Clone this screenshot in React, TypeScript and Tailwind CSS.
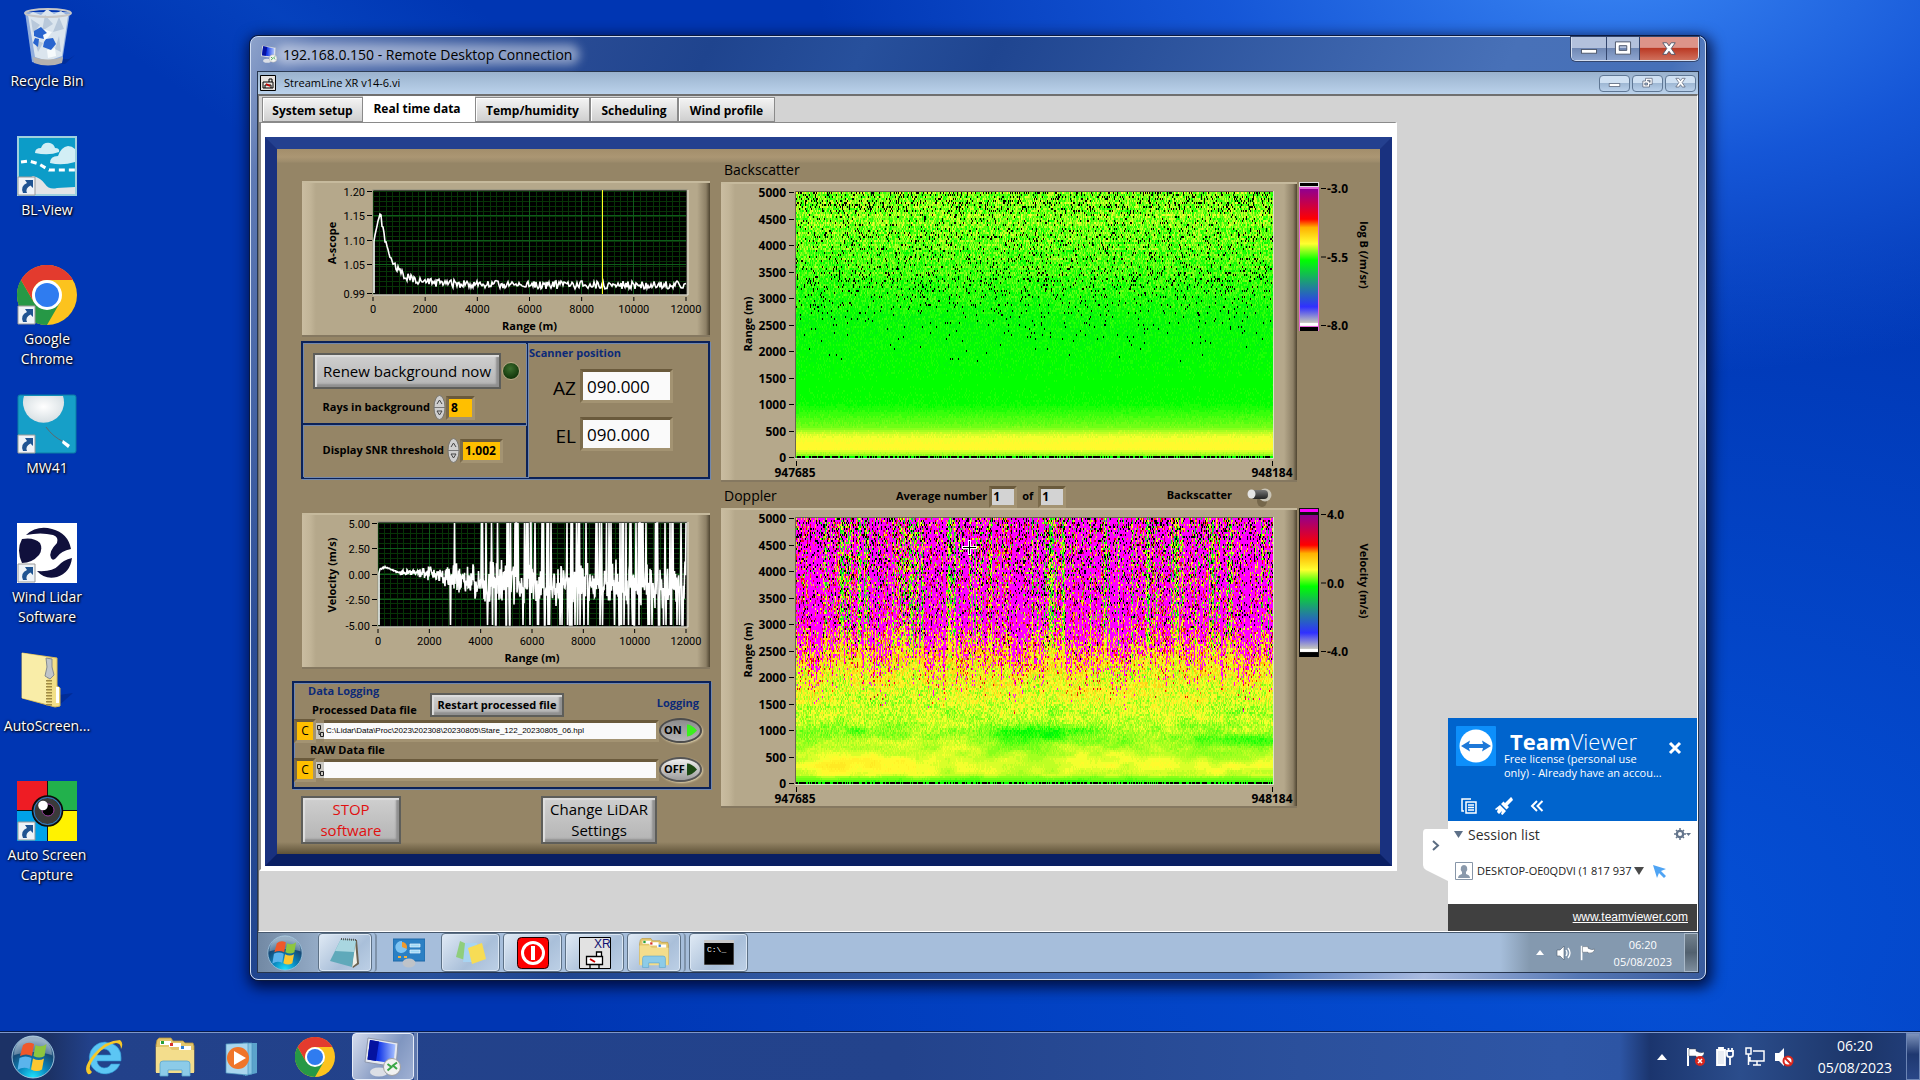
import React, { useMemo, useState } from 'react';

type Tick = [label: string, pos: number];
type Rgb = [number, number, number];

/* ---------- helpers ---------- */

function makeRandom(seed: number) {
  let s = seed;
  return () => {
    s = (s * 1664525 + 1013904223) % 4294967296;
    return s / 4294967296;
  };
}

// smooth 2D value noise
function makeNoise(seed: number) {
  const rnd = makeRandom(seed);
  const table = Array.from({ length: 4096 }, () => rnd());
  const at = (x: number, y: number) => table[(x * 71 + y * 193) & 4095];
  return (x: number, y: number) => {
    const xi = Math.floor(x);
    const yi = Math.floor(y);
    const fx = x - xi;
    const fy = y - yi;
    const u = fx * fx * (3 - 2 * fx);
    const v = fy * fy * (3 - 2 * fy);
    const top = at(xi, yi) * (1 - u) + at(xi + 1, yi) * u;
    const bottom = at(xi, yi + 1) * (1 - u) + at(xi + 1, yi + 1) * u;
    return top * (1 - v) + bottom * v;
  };
}

const RAMP: [number, Rgb][] = [
  [0, [255, 255, 255]],
  [0.03, [190, 190, 190]],
  [0.14, [48, 48, 255]],
  [0.3, [32, 140, 140]],
  [0.48, [0, 255, 0]],
  [0.6, [255, 255, 48]],
  [0.72, [255, 176, 0]],
  [0.78, [255, 0, 0]],
  [1, [144, 0, 144]],
];

const LEVELS = 80;
const BLACK = LEVELS;
const OVER = LEVELS + 1;

function levelColor(level: number) {
  if (level === BLACK) return '#000';
  if (level === OVER) return '#f0f';
  const v = level / (LEVELS - 1);
  let i = 1;
  while (i < RAMP.length - 1 && RAMP[i][0] < v) i++;
  const [a, ca] = RAMP[i - 1];
  const [b, cb] = RAMP[i];
  const t = (v - a) / (b - a);
  return `rgb(${ca.map((c, k) => Math.round(c + (cb[k] - c) * t)).join(',')})`;
}

const toLevel = (v: number) => Math.round(Math.min(1, Math.max(0, v)) * (LEVELS - 1));
const lerp = (a: number, b: number, t: number) => a + (b - a) * Math.min(1, Math.max(0, t));

const COLS = 477;
const ROWS = 133;

// one path per colour level, horizontal runs merged
function buildPaths(cell: (x: number, range: number) => number) {
  const parts: string[][] = Array.from({ length: LEVELS + 2 }, () => []);
  for (let r = 0; r < ROWS; r++) {
    const range = 5000 * (1 - r / (ROWS - 1));
    let start = 0;
    let prev = cell(0, range);
    for (let x = 1; x <= COLS; x++) {
      const next = x < COLS ? cell(x, range) : -1;
      if (next !== prev) {
        parts[prev].push(`M${start} ${r * 2 + 1}h${x - start}`);
        start = x;
        prev = next;
      }
    }
  }
  return parts.map((p, level) => ({ level, d: p.join('') })).filter((p) => p.d);
}

function backscatterPaths() {
  const rnd = makeRandom(7);
  const band = makeRandom(21);
  const bands = Array.from({ length: ROWS }, () => band());
  return buildPaths((x, range) => {
    const b = bands[Math.round((range / 5000) * (ROWS - 1))];
    if (range < 20) return rnd() < 0.65 ? BLACK : toLevel(0.48);
    let black = 0;
    if (range > 1700) black = lerp(0, 0.025, (range - 1700) / 1000);
    if (range > 2700) black = lerp(0.03, 0.09, (range - 2700) / 450) * (0.5 + b);
    if (range > 3600) black = 0.04 + 0.06 * b;
    if (range > 4150 && range < 4350) black = 0.1;
    if (range > 4650) black = 0.12 + 0.11 * b;
    if (rnd() < black) return BLACK;
    if (range < 240) return toLevel(lerp(0.53, 0.607, range / 160) + (rnd() - 0.5) * 0.008);
    if (range < 420) return toLevel(lerp(0.607, 0.585, (range - 240) / 180) + (rnd() - 0.5) * 0.01);
    if (range < 560) return toLevel(lerp(0.585, 0.535, (range - 420) / 140) + (rnd() - 0.5) * 0.01);
    if (range < 1000) return toLevel(lerp(0.535, 0.485, (range - 560) / 440) + (rnd() - 0.5) * 0.012);
    const mean = range < 2700 ? lerp(0.485, 0.478, (range - 1000) / 1000) : lerp(0.483, 0.54, (range - 2700) / 1700);
    const spread = lerp(0.01, 0.11, (range - 1400) / 2800);
    return toLevel(mean + (rnd() - 0.5) * spread + (range > 3400 ? (b - 0.5) * 0.025 : 0));
  });
}

function dopplerPaths() {
  const rnd = makeRandom(99);
  const colRnd = makeRandom(5);
  const noise = makeNoise(3);
  const cols = Array.from({ length: COLS + 1 }, (_, x) => colRnd() * 0.75 + noise(x / 7, 3) * 0.5 - 0.1);
  return buildPaths((x, range) => {
    const c = cols[x];
    const u = x / COLS;
    if (range < 20) return rnd() < 0.6 ? BLACK : toLevel(0.48);
    const onset = 1250 + (1 - c) * 1200;
    const wild = lerp(0, 1, (range - onset) / 900);
    if (rnd() < wild * lerp(0.5, 0.98, (range - 1600) / 1400)) {
      if (range > 2300 && rnd() < lerp(0.02, 0.15, (range - 2500) / 2300)) return BLACK;
      if (rnd() < lerp(0.25, 0.78, (range - 1700) / 1300) * lerp(0.1, 1.5, c * 1.05)) return OVER;
      if (c < 0.25) return toLevel(0.36 + rnd() * 0.32);
      return toLevel(lerp(0.56, 0.47, (range - 2000) / 2000) + rnd() * lerp(0.3, 0.45, (range - 2000) / 1500));
    }
    let v = 0.568 + (noise(x / 15, range / 110) - 0.5) * 0.04;
    v += (noise(x / 40 + 9, range / 260 + 5) - 0.5) * 0.03;
    v += lerp(0, 0.075, (range - 1300) / 1100);
    v += (rnd() - 0.5) * lerp(0.01, 0.15, (range - 500) / 1700);
    v += (c - 0.5) * lerp(0.005, 0.04, (range - 600) / 1400);
    // thin updraft layer
    v -= 0.08 * Math.exp(-(((range - 930) / 190) ** 2) - ((u - 0.52) / 0.12) ** 2);
    v -= 0.07 * Math.exp(-(((range - 800) / 140) ** 2) - ((u - 0.98) / 0.2) ** 2);
    v -= 0.025 * Math.exp(-(((range - 950) / 120) ** 2) - ((u - 0.12) / 0.25) ** 2);
    v += 0.025 * Math.exp(-(((range - 330) / 190) ** 2)) * (u < 0.25 ? 1.5 : 0.9);
    if (range < 150) v = lerp(0.5, v, range / 170);
    return toLevel(v);
  });
}

function ascopePath() {
  const rnd = makeRandom(11);
  const pts: string[] = ['72 112', '72 60'];
  for (let x = 73; x <= 384; x++) {
    const t = x - 71;
    let v: number;
    if (t < 7) v = lerp(1.1, 1.156, (t - 1) / 6);
    else v = 1.0085 + 0.128 * Math.exp(-(t - 7) / 9) + 0.022 * Math.exp(-(t - 7) / 34);
    const y = 113 - (v - 0.99) * 490 + (rnd() - 0.5) * (t < 7 ? 2 : 8);
    pts.push(`${x} ${y.toFixed(1)}`);
  }
  return `M${pts.join('L')}`;
}

function velocityPath() {
  const rnd = makeRandom(42);
  const pts: string[] = ['77 112', '77 60'];
  for (let x = 78; x <= 384; x += 0.5) {
    const t = x - 76;
    const base = t < 22 ? 54 + Math.abs(t - 7) * 0.4 : 59 + lerp(0, 13, (t - 40) / 80);
    const amp = t < 22 ? 1 : t < 40 ? 5 : lerp(8, 36, (t - 40) / 70);
    let y = base + (rnd() - 0.5) * amp * (0.5 + rnd());
    const spike = t < 68 ? 0 : t < 100 ? 0.1 : 0.25;
    if (rnd() < spike) y = rnd() < 0.5 ? 10 : 112;
    pts.push(`${x} ${Math.min(112, Math.max(10, y)).toFixed(1)}`);
  }
  return `M${pts.join('L')}`;
}

/* ---------- instrument widgets ---------- */

const RAISED =
  'border-t-2 border-b-2 border-t-[#c6ba9d] border-b-[#857860] bg-[linear-gradient(90deg,#cabda1_0,#c2b598_8px,#b5a88b_14px,#b5a88b_calc(100%-13px),#8d8066_calc(100%-4px),#4f4531_100%)]';
const SUNKEN = 'border-[3px] border-t-[#6a5a3c] border-l-[#7b6b4b] border-r-[#a39372] border-b-[#a39372]';
const GROUP = 'border-[#0b2259] shadow-[inset_1px_1px_0_#7288ae,1px_1px_0_#7288ae]';
const METAL =
  'border-2 border-[#5e5e5a] bg-[linear-gradient(#cfcfcf,#b4b4b4)] shadow-[inset_2px_2px_1px_#dedede,inset_-3px_-3px_2px_#909090]';

interface LineGraphProps {
  left: number;
  yTicks: Tick[];
  yTitle: string;
  path: string;
  cursor?: number;
}

const LineGraph: React.FC<LineGraphProps> = ({ left, yTicks, yTitle, path, cursor }) => {
  const right = 384;
  const step = (right - left) / 6;
  const minorX = Array.from({ length: 48 }, (_, i) => left + (i * step) / 8);
  const minorY = Array.from({ length: 20 }, (_, i) => 10 + i * 5);

  return (
    <div className={`ml-[10px] h-[156px] w-[408px] ${RAISED}`}>
      <svg viewBox="0 2 408 152" className="h-[152px] w-full text-[11px]">
        <rect x={left} y="9" width={right - left + 1} height="105" fill="#000" stroke="#8d8d80" />
        <g stroke="#073407" shapeRendering="crispEdges">
          {minorX.map((x) => <path key={x} d={`M${x} 10V113`} />)}
          {minorY.map((y) => <path key={y} d={`M${left} ${y}H${right}`} />)}
        </g>
        <g stroke="#0f5a1a" shapeRendering="crispEdges">
          {[1, 2, 3, 4, 5].map((i) => <path key={i} d={`M${left + i * step} 10V113`} />)}
          {yTicks.slice(1, 4).map(([label, y]) => <path key={label} d={`M${left} ${y}H${right}`} />)}
        </g>
        <path d={path} fill="none" stroke="#fff" strokeWidth="1.6" />
        {cursor && <path d={`M${cursor} 9V113`} stroke="#ffff20" shapeRendering="crispEdges" />}
        <path d={`M${left} 114H386V9`} fill="none" stroke="#e8e4d8" />
        <g className="font-['Roboto','Open_Sans',sans-serif]">
          {yTicks.map(([label, y]) => (
            <g key={label}>
              <text x={left - 8} y={y + 4} textAnchor="end">{label}</text>
              <path d={`M${left - 6} ${y}h5`} stroke="#000" />
            </g>
          ))}
          {[0, 2000, 4000, 6000, 8000, 10000, 12000].map((v, i) => (
            <g key={v}>
              <text x={left + i * step} y="132" textAnchor="middle">{v}</text>
              <path d={`M${left + i * step} 116v4`} stroke="#000" />
            </g>
          ))}
        </g>
        <text x={(left + right) / 2} y="149" textAnchor="middle" className="font-bold">Range (m)</text>
        <text transform="translate(34 62) rotate(-90)" textAnchor="middle" className="font-bold">{yTitle}</text>
      </svg>
    </div>
  );
};

interface HeatMapProps {
  paths: { level: number; d: string }[];
  cross?: boolean;
}

const HeatMap: React.FC<HeatMapProps> = ({ paths, cross }) => (
  <div className={`h-[300px] w-[576px] ${RAISED}`}>
    <svg viewBox="0 2 576 296" className="h-[296px] w-full text-[12px] font-bold">
      <svg x="75" y="10" width={COLS} height="266" viewBox={`0 0 ${COLS} 266`}>
        <g fill="none" strokeWidth="2" shapeRendering="crispEdges">
          {paths.map(({ level, d }) => <path key={level} d={d} stroke={levelColor(level)} />)}
        </g>
      </svg>
      <path d="M74.500 276V9.500H552" fill="none" stroke="#6c6450" />
      <path d="M74 276.500H552.500V9" fill="none" stroke="#d9e8c4" />
      {Array.from({ length: 11 }, (_, i) => (
        <g key={i}>
          <text x="65" y={15 + i * 26.5} textAnchor="end">{5000 - i * 500}</text>
          <path d={`M68 ${Math.round(10 + i * 26.5) + 0.5}h5`} stroke="#000" />
        </g>
      ))}
      <path d="M75.500 279v5M551.500 279v5" stroke="#000" />
      <text x="74" y="295" textAnchor="middle">947685</text>
      <text x="551" y="295" textAnchor="middle">948184</text>
      <text transform="translate(31 142) rotate(-90)" textAnchor="middle" className="text-[11px]">Range (m)</text>
      {cross && (
        <g stroke="#fff" strokeWidth="3">
          <path d="M248.500 32v15M241 39.500h15" />
          <path d="M248.500 33v13M242 39.500h13" stroke="#000" strokeWidth="1" />
        </g>
      )}
    </svg>
  </div>
);

interface ColorScaleProps {
  id: string;
  labels: string[];
  title: string;
  overTop?: boolean;
}

const ColorScale: React.FC<ColorScaleProps> = ({ id, labels, title, overTop }) => (
  <svg viewBox="0 0 82 152" className="ml-px h-[152px] w-[82px] overflow-visible text-[12px] font-bold">
    <defs>
      <linearGradient id={id} x1="0" y1="1" x2="0" y2="0">
        {RAMP.map(([at, c]) => <stop key={at} offset={at} stopColor={`rgb(${c.join(',')})`} />)}
      </linearGradient>
    </defs>
    <rect x="1" y="5" width="20" height="144" fill={overTop ? '#111' : '#e464d8'} />
    <rect x="2" y="7" width="18" height="137" fill={`url(#${id})`} />
    <rect x="2" y="141" width="18" height="2" fill="#fff" />
    <rect x="1" y="0" width="20" height="5" fill={overTop ? '#111' : '#ddd'} />
    <rect x="2" y="1" width="18" height="3" fill={overTop ? '#f0f' : '#000'} />
    <rect x="2" y="145" width="18" height="4" fill="#000" />
    {labels.map((label, i) => (
      <g key={label}>
        <path d={`M23 ${6.5 + i * 68.5}h5`} stroke="#000" />
        <text x="29" y={11 + i * 68.5}>{label}</text>
      </g>
    ))}
    <text transform="translate(62 73) rotate(90)" textAnchor="middle" className="text-[11px]">{title}</text>
  </svg>
);

const Spinner: React.FC<{ label: string }> = ({ label }) => (
  <button type="button" aria-label={label} className="h-[25px] w-[13px]">
    <svg viewBox="0 0 13 25" className="size-full">
      <ellipse cx="6.500" cy="12.500" rx="5.500" ry="12" fill="#cfcfcf" stroke="#77746c" />
      <path d="M1 12.500h11" stroke="#777" />
      <path d="M4 9l2.500-4L9 9M4 16l2.500 4L9 16z" fill="none" stroke="#444" />
    </svg>
  </button>
);

interface SwitchProps {
  on: boolean;
  label: string;
  onToggle: () => void;
}

const OvalSwitch: React.FC<SwitchProps> = ({ on, label, onToggle }) => (
  <button
    type="button"
    role="switch"
    aria-checked={on}
    aria-label={label}
    onClick={onToggle}
    className={`flex h-[25px] w-[43px] items-center justify-between rounded-[50%] border-2 pr-[3px] pl-[3px] text-[11px] font-bold shadow-[1px_1px_2px_#d8cba8] ${
      on ? 'border-[#4c4c4c] bg-[linear-gradient(#8d8d8d,#b5b5b5)]' : 'border-[#555] bg-[linear-gradient(#efefef,#9c9c9c)]'
    }`}
  >
    {on ? 'ON' : 'OFF'}
    <svg viewBox="0 0 11 13" className="h-[13px] w-[10px] shrink-0">
      <path d="M0 0Q5 0 11 6.500Q5 13 0 13z" fill={on ? '#3cf01e' : '#1d4a14'} />
    </svg>
  </button>
);

const PathRow: React.FC<{ id: string; value: string }> = ({ id, value }) => (
  <div className="flex h-6 items-center">
    <button type="button" aria-label="Select drive" className={`h-6 w-[22px] text-[12px] leading-4 font-medium ${SUNKEN} bg-[#ffbf00]`}>C</button>
    <svg viewBox="0 0 8 16" className="h-4 w-2 bg-[#c9c7c0]" fill="none" stroke="#222">
      <path d="M1.500 2.500h3v4h-3zM4.500 9.500h3v4h-3zM3 6.500v5h1.500" />
    </svg>
    <input
      id={id}
      defaultValue={value}
      className={`h-[22px] w-[335px] bg-[#fafafa] pl-0.5 font-['Liberation_Sans',sans-serif] text-[8px] font-normal ${SUNKEN} border-l-0`}
    />
  </div>
);

const DataPanel: React.FC = () => {
  const [processed, setProcessed] = useState(true);
  const [raw, setRaw] = useState(false);
  const ascope = useMemo(ascopePath, []);
  const velocity = useMemo(velocityPath, []);
  const backscatter = useMemo(backscatterPaths, []);
  const doppler = useMemo(dopplerPaths, []);

  return (
    <div className="border-[12px] border-t-[#24408f] border-r-[#19317f] border-b-[#0a1f63] border-l-[#19317f] bg-[#958566]">
      <div className="flex bg-[linear-gradient(#a38e6b_0,#ab9673_8px,#9c8b6b_13px,#958566_14px,#958566_calc(100%-12px),#5f5238_100%)] pb-2.5">
        <div className="w-[434px] shrink-0 pt-8 pl-[15px]">
          <LineGraph
            left={71}
            yTicks={[['1.20', 10.5], ['1.15', 34.5], ['1.10', 59.5], ['1.05', 83.5], ['0.99', 112.5]]}
            yTitle="A-scope"
            path={ascope}
            cursor={300.5}
          />

          <div className={`mt-1 ml-[9px] flex h-[138px] w-[409px] border-2 text-[11px] font-bold ${GROUP}`}>
            <div className={`w-[225px] border-r-2 ${GROUP}`}>
              <div className={`h-[82px] border-b-2 pt-2.5 pl-2.5 ${GROUP}`}>
                <div className="flex items-center gap-px">
                  <button type="button" className={`h-9 w-[188px] text-[15px] font-normal ${METAL}`}>Renew background now</button>
                  <span className="size-[18px] rounded-full border border-[#b9aa86] bg-[radial-gradient(circle_at_45%_35%,#3c6e2e,#14380c_70%)]" />
                </div>
                <div className="mt-1.5 flex items-center justify-end pr-[51px]">
                  <label htmlFor="rays" className="mr-[3px]">Rays in background</label>
                  <Spinner label="Change rays in background" />
                  <input id="rays" defaultValue="8" className={`h-6 w-[29px] bg-[#ffbf00] pl-0.5 text-[12px] ${SUNKEN}`} />
                </div>
              </div>
              <div className="flex items-center justify-end pt-[13px] pr-[23px]">
                <label htmlFor="snr" className="mr-[3px]">Display SNR threshold</label>
                <Spinner label="Change SNR threshold" />
                <input id="snr" defaultValue="1.002" className={`h-6 w-[43px] bg-[#ffbf00] pl-0.5 text-[12px] ${SUNKEN}`} />
              </div>
            </div>
            <div className="flex-1 pt-0.5 pl-px">
              <h3 className="leading-4 text-[#0c2a78]">Scanner position</h3>
              <div className="mt-2 flex flex-col gap-[14px] pr-[35px] text-[17px] font-normal">
                {['AZ', 'EL'].map((axis) => (
                  <div key={axis} className="flex items-center justify-end gap-1">
                    <label htmlFor={axis} className="pt-1 text-[19px] leading-7">{axis}</label>
                    <input id={axis} readOnly value="090.000" className={`h-[34px] w-[93px] bg-[#fafafa] pl-1 ${SUNKEN}`} />
                  </div>
                ))}
              </div>
            </div>
          </div>

          <div className="h-[34px]" />
          <LineGraph
            left={76}
            yTicks={[['5.00', 10.5], ['2.50', 35.5], ['0.00', 61.5], ['-2.50', 86.5], ['-5.00', 112.5]]}
            yTitle="Velocity (m/s)"
            path={velocity}
          />

          <div className={`mt-3 h-[108px] w-[419px] border-2 text-[11px] font-bold ${GROUP}`}>
            <div className="flex h-[35px] pr-2.5">
              <div className="w-[136px] pl-[14px]">
                <h3 className="leading-4 text-[#0c2a78]">Data Logging</h3>
                <label htmlFor="processed" className="block pl-1 leading-[22px]">Processed Data file</label>
              </div>
              <button type="button" className={`mt-2.5 h-6 w-[134px] shrink-0 ${METAL}`}>Restart processed file</button>
              <span className="ml-auto pt-3 leading-4 text-[#0c2a78]">Logging</span>
            </div>
            <div className="flex items-center">
              <PathRow id="processed" value="C:\Lidar\Data\Proc\2023\202308\20230805\Stare_122_20230805_06.hpl" />
              <OvalSwitch on={processed} label="Processed logging" onToggle={() => setProcessed(!processed)} />
            </div>
            <label htmlFor="raw" className="block pl-4 leading-[14px]">RAW Data file</label>
            <div className="flex items-center">
              <PathRow id="raw" value="" />
              <OvalSwitch on={raw} label="RAW logging" onToggle={() => setRaw(!raw)} />
            </div>
          </div>

          <div className="mt-[7px] flex justify-between pr-[54px] pl-[9px] text-[15px] leading-[21px]">
            <button type="button" className={`h-12 w-[100px] text-[#e01010] ${METAL}`}>STOP<br />software</button>
            <button type="button" className={`h-12 w-[116px] ${METAL}`}>Change LiDAR<br />Settings</button>
          </div>
        </div>

        <div className="pt-[11px] pl-[10px]">
          <h2 className="pl-[3px] text-[14px] leading-5">Backscatter</h2>
          <div className="mt-0.5 flex">
            <HeatMap paths={backscatter} />
            <ColorScale id="scale-b" labels={['-3.0', '-5.5', '-8.0']} title="log B (/m/sr)" />
          </div>
          <div className="flex h-[26px] w-[576px] items-center pl-[3px] text-[11px] font-bold">
            <h2 className="w-[172px] text-[14px] font-normal">Doppler</h2>
            <div className="flex items-center pt-[3px]">
              <label htmlFor="avg" className="mr-0.5">Average number</label>
              <input id="avg" readOnly value="1" className={`h-[22px] w-[28px] bg-[#d3d3d3] pl-px text-[12px] ${SUNKEN}`} />
              <label htmlFor="avg-total" className="mx-[5px]">of</label>
              <input id="avg-total" readOnly value="1" className={`h-[22px] w-[28px] bg-[#d3d3d3] pl-px text-[12px] ${SUNKEN}`} />
            </div>
            <label htmlFor="mode" className="ml-auto">Backscatter</label>
            <button id="mode" type="button" aria-label="Toggle display mode" className="mr-[25px] ml-[14px] h-6 w-[26px]">
              <svg viewBox="0 0 26 24" className="size-full">
                <defs>
                  <linearGradient id="lever" x1="0" y1="0" x2="0" y2="1">
                    <stop offset="0" stopColor="#777" />
                    <stop offset="1" stopColor="#222" />
                  </linearGradient>
                </defs>
                <ellipse cx="16" cy="18" rx="5" ry="6" fill="#75674b" />
                <circle cx="19" cy="12" r="6.500" fill="#c9c4b6" />
                <rect x="5" y="7" width="17" height="9" rx="4" fill="url(#lever)" />
                <ellipse cx="5.500" cy="11" rx="4" ry="4.500" fill="#e4e4e4" />
              </svg>
            </button>
          </div>
          <div className="flex">
            <HeatMap paths={doppler} cross />
            <ColorScale id="scale-d" labels={['4.0', '0.0', '-4.0']} title="Velocity (m/s)" overTop />
          </div>
        </div>
      </div>
    </div>
  );
};

/* ---------- icons ---------- */

const Orb: React.FC<{ id: string; className: string }> = ({ id, className }) => (
  <svg viewBox="0 0 44 44" className={className}>
    <defs>
      <radialGradient id={id} cx="0.5" cy="1" r="0.9">
        <stop offset="0" stopColor="#1fe6ff" />
        <stop offset="0.4" stopColor="#0a86bd" />
        <stop offset="0.75" stopColor="#164a76" />
        <stop offset="1" stopColor="#6c8fae" />
      </radialGradient>
    </defs>
    <circle cx="22" cy="22" r="21" fill={`url(#${id})`} stroke="#9cc2dc" />
    <path d="M3 20a19 19 0 0 1 38 0q-19-6-38 0z" fill="#fff" opacity="0.3" />
    <path d="M12 10q5-4 11-1l-2 12q-6-3-12 0z" fill="#f0582a" />
    <path d="M24.500 10q6 3 11-1l-2 12q-5 3-11 0z" fill="#8dc63f" />
    <path d="M8.500 23q6-3 12 0l-2 11q-6-3-12 1z" fill="#5bb4ec" />
    <path d="M22 23.500q6 3 11 0l-2 11q-5 3-11 0z" fill="#fdc730" />
  </svg>
);

const ChromeLogo: React.FC<{ className: string }> = ({ className }) => (
  <svg viewBox="0 0 60 60" className={className}>
    <circle cx="30" cy="30" r="30" fill="#fcc31e" />
    <path d="M4 15A30 30 0 0 0 30 60L43 37.500L30 30L17 37.500z" fill="#269846" />
    <path d="M4 15A30 30 0 0 1 56 15H30A15 15 0 0 0 17 37.500z" fill="#e33b2e" />
    <circle cx="30" cy="30" r="15" fill="#fff" />
    <circle cx="30" cy="30" r="12" fill="#2f7cf0" />
  </svg>
);

const FolderIcon: React.FC<{ className: string }> = ({ className }) => (
  <svg viewBox="0 0 42 40" className={className}>
    <path d="M3 3l2-2h12l2 3h10l2 2h8l1 3v26H2V8z" fill="#e3c66c" stroke="#b8953c" strokeWidth="0.800" />
    <path d="M6 4h11v4H6zM15 6h12v4H15zM25 9h12v4H25z" fill="#fff" />
    <path d="M7 4h3v3H7z" fill="#26a03a" />
    <path d="M16 6h3v3h-3z" fill="#d8342c" />
    <path d="M27 9h3v3h-3z" fill="#2f7fd6" />
    <path d="M2 10h13l3 3h22v23H2z" fill="#f3dd8c" />
    <path d="M6 39V27q0-3 3-3h24q3 0 3 3v12h-8v-6H14v6z" fill="#8ccbe8" stroke="#5aa5cc" strokeWidth="0.800" />
  </svg>
);

const RemoteIcon: React.FC<{ className: string }> = ({ className }) => (
  <svg viewBox="0 0 38 40" className={className}>
    <defs>
      <linearGradient id="remote-screen" x1="0" y1="0" x2="1" y2="0">
        <stop offset="0" stopColor="#0518b8" />
        <stop offset="0.4" stopColor="#1438e8" />
        <stop offset="1" stopColor="#a9c3ff" />
      </linearGradient>
    </defs>
    <ellipse cx="15" cy="35" rx="9" ry="4.500" fill="#dcdfe6" />
    <path d="M4 1l30 5-2 24L1 25z" fill="#e6e9f0" stroke="#8e97aa" />
    <path d="M6 3l25.500 4.500-2 19L3.500 22.500z" fill="url(#remote-screen)" />
    <path d="M6 3l9 1.500-3 19.500-8.500-1.500z" fill="#0412a0" />
    <circle cx="28" cy="30" r="8.500" fill="#f1f1f1" stroke="#a0a0a0" />
    <path d="M23.500 27l4 3-4 3.500M33 25.500l-4 3 4 3.500" fill="none" stroke="#3aa646" strokeWidth="2" />
  </svg>
);

const ShortcutArrow = () => (
  <g>
    <path d="M1 41h17v18H1z" fill="#eef3f8" stroke="#9a9a9a" />
    <path d="M6 57q-3-7 4-10l-2-3h8v8l-2.500-2.500Q8 52 10 57z" fill="#1f5391" />
  </g>
);

const RecycleBin = () => (
  <svg viewBox="0 0 60 60" className="size-[60px]">
    <path d="M14 52h38l6-4-10 9H20z" fill="#001f70" opacity="0.35" />
    <path d="M8 5l7 50q15 5 30 0l8-50z" fill="#a9c2e4" opacity="0.85" />
    <path d="M11 8l5-3 8 3 6-6 7 5 7-3 7 5-6 40-14 5-13-4z" fill="#dbe5ee" />
    <path d="M14 12l9 6-7 8zM28 8l8 9-11 7zM42 10l5 12-11 3zM17 32l9 4-5 9zM42 29l-4 13 6 3z" fill="#b8c8da" />
    <path d="M26 22l9 3-6 8-8-2zM30 43l8-2 1 8-8 2z" fill="#f6fafc" />
    <path d="M17 24l7-4 6 6-4 2 1 4-5-1-5-2zM29 32l7-1 3 6-5 6-8-3 1-5zM18 31l4 1-1 8-5-4z" fill="#2864cf" />
    <ellipse cx="31" cy="6" rx="23" ry="4" fill="none" stroke="#c7c7c7" strokeWidth="2" />
    <path d="M16 50q15 5 30 0l-1 6q-14 5-28 0z" fill="#b5b2af" />
  </svg>
);

const BlView = () => (
  <svg viewBox="0 0 60 60" className="size-[60px]">
    <path d="M0 0h60v60H0z" fill="#9fd0de" />
    <path d="M2 2h56v56H2z" fill="#0c9cc8" />
    <path d="M18 17q0-5 6-5 2-6 9-5 4 1 5 5 5 0 4 4-10 4-24 1zM33 27q0-7 8-7 3-9 10-10 4 0 7 3v13q-13 4-25 1z" fill="#d2eef5" />
    <path d="M4 26l8-1 10 3 10 6h26" fill="none" stroke="#fff" strokeWidth="3" strokeDasharray="6 4" />
    <path d="M2 58V48l14-8q8 2 12 8t12 4l18-1v7z" fill="#e2e4e6" />
    <ShortcutArrow />
  </svg>
);

const Mw41 = () => (
  <svg viewBox="0 0 60 60" className="size-[60px]">
    <defs>
      <radialGradient id="balloon" cx="0.5" cy="0.4" r="0.6">
        <stop offset="0" stopColor="#fff" />
        <stop offset="1" stopColor="#d6dee2" />
      </radialGradient>
    </defs>
    <rect x="1" y="1" width="58" height="58" rx="2" fill="#169fc8" stroke="#0a7da5" />
    <path d="M7 2h39a20.500 20.500 0 1 1-39 0z" fill="url(#balloon)" />
    <path d="M29 33q7 10 18 15" fill="none" stroke="#5c6a70" />
    <path d="M46 46l7 5-2 3-6-5z" fill="#fff" />
    <ShortcutArrow />
  </svg>
);

const WindLidar = () => (
  <svg viewBox="0 0 60 60" className="size-[60px]">
    <path d="M0 0h60v60H0z" fill="#fff" />
    <path d="M9 12Q20 2 35 6q16 4 19 20-10 2-14 8-4 5-6 1-3-6 6-15 2-6-4-8-12-3-27 0z" fill="#10103c" />
    <path d="M5 16q12-2 18 4 3 6-1 12-7 8-17 8Q-1 27 5 16z" fill="#10103c" />
    <path d="M20 48q16 1 21-5 5-6 14-8-2 15-15 19-12 3-20-6z" fill="#10103c" />
    <ShortcutArrow />
  </svg>
);

const ZipFolder = () => (
  <svg viewBox="0 0 60 60" className="size-[60px]">
    <path d="M40 55l16-14-14 2z" fill="#00227c" opacity="0.5" />
    <path d="M5 1l35 5v28l3 2v18l-5 1L5 46z" fill="#f2df88" stroke="#d6b95a" />
    <path d="M5 1l25 4v47L5 46z" fill="#f9eda8" />
    <path d="M39 35h3v16h-3z" fill="#fff" />
    <path d="M32 28v26" stroke="#a08b45" strokeWidth="6" strokeDasharray="1.500 1.500" />
    <path d="M29 6l6 1v8l2 8-4 4-5-3 2-9z" fill="#c0c5c9" stroke="#858b90" />
  </svg>
);

const AutoCapture = () => (
  <svg viewBox="0 0 60 60" className="size-[60px]">
    <path d="M0 0h30v30H0z" fill="#ee1c24" />
    <path d="M30 0h30v30H30z" fill="#22b14c" />
    <path d="M0 30h30v30H0z" fill="#00a2e8" />
    <path d="M30 30h30v30H30z" fill="#fff200" />
    <path d="M30.500 0v60M0 29.500h60" stroke="#111" />
    <circle cx="30.500" cy="30" r="15" fill="#3a3a3a" stroke="#0b0b0b" strokeWidth="1.500" />
    <circle cx="30.500" cy="30" r="13.500" fill="none" stroke="#2b84d8" />
    <circle cx="31" cy="29" r="6" fill="#000" stroke="#9a3fa0" />
    <circle cx="26" cy="24.500" r="4.800" fill="#fff" />
    <ShortcutArrow />
  </svg>
);

const FlagIcon: React.FC<{ alert?: boolean; className: string }> = ({ alert, className }) => (
  <svg viewBox="0 0 20 20" className={className}>
    <path d="M2 1v18" stroke="#fff" strokeWidth="2" />
    <path d="M3 2h7v2q5 3 8 1v2q-2 4-8 3V9H3z" fill="#fff" stroke="#3c4654" strokeWidth="0.500" />
    {alert && (
      <g>
        <circle cx="14" cy="14" r="5" fill="#d9261c" />
        <path d="M12 12l4 4m0-4l-4 4" stroke="#fff" strokeWidth="1.500" />
      </g>
    )}
  </svg>
);

const CaptionGlyph: React.FC<{ kind: string; className: string }> = ({ kind, className }) => (
  <svg viewBox="0 0 20 18" className={className} fill="#fff" stroke="#4b5569" strokeWidth="1">
    {kind === 'min' && <rect x="2" y="10" width="16" height="4" />}
    {kind === 'max' && <path d="M2 2h16v13H2zM6 6v5h8V6z" fillRule="evenodd" />}
    {kind === 'restore' && <path d="M7 2h10v9h-4v4H3V6h4zM6 9v3h4V9zM10 5v1h3v2h1V5z" fillRule="evenodd" />}
    {kind === 'close' && <path d="M3 2h4.500L10 5.500L12.500 2H17l-4.500 6.500L17 15h-4.500L10 11.500L7.500 15H3l4.500-6.500z" />}
  </svg>
);

/* ---------- windows ---------- */

const TABS = [
  { name: 'System setup', width: 'w-[101px]' },
  { name: 'Real time data', width: 'w-[112px]' },
  { name: 'Temp/humidity', width: 'w-[115px]' },
  { name: 'Scheduling', width: 'w-[88px]' },
  { name: 'Wind profile', width: 'w-[97px]' },
];

const TeamViewer: React.FC = () => (
  <aside className="absolute right-0 bottom-0 flex items-start">
    <button type="button" aria-label="Collapse panel" className="mt-[111px] h-[52px] w-[26px]">
      <svg viewBox="0 0 26 52" className="size-full">
        <path d="M26 0H4Q1 0 1 4v32q0 3 3 5l22 11z" fill="#fff" />
        <path d="M11 12l5 4.500L11 21" fill="none" stroke="#5c6d82" strokeWidth="2" />
      </svg>
    </button>
    <div className="w-[249px]">
      <div className="h-[103px] bg-[#0064cd] text-white">
        <div className="flex h-[79px] pt-2 pl-2">
          <svg viewBox="0 0 40 40" className="size-10 shrink-0">
            <rect width="40" height="40" rx="1" fill="#0d8ffb" />
            <circle cx="20" cy="20" r="16.500" fill="#fff" />
            <path d="M5 20l9-5.500-1 3.500h14l-1-3.500 9 5.500-9 5.500 1-3.500H13l1 3.500z" fill="#1d78d8" />
          </svg>
          <div className="ml-2 w-[162px]">
            <div className="pl-1.5 text-[22px] leading-[30px]"><b>Team</b><span className="font-light">Viewer</span></div>
            <p className="-mt-1 text-[11px] leading-[14px]">Free license (personal use<br />only) - Already have an accou...</p>
          </div>
          <button type="button" aria-label="Close" className="mt-3.5 ml-0.5 h-4 w-4">
            <svg viewBox="0 0 14 14" className="size-[14px]"><path d="M2 2l10 10M12 2L2 12" stroke="#fff" strokeWidth="3" /></svg>
          </button>
        </div>
        <div className="flex items-center gap-[17px] pl-3">
          <svg viewBox="0 0 18 18" className="size-[18px]" fill="none" stroke="#fff" strokeWidth="1.500">
            <path d="M11 2H2v12h2M6 5h10v11H6zM8 8h6M8 10.500h6M8 13h6" />
          </svg>
          <svg viewBox="0 0 18 18" className="size-[18px]" fill="#fff">
            <path d="M17 1l-1-1-6 6-1.500-1.500L6 7l5.500 5.500L14 10l-1.500-1.500L18 3zM5 8L0 12l1 1 2-1-1 3 2 2 3-3-1 3 1.500 1L11 14z" />
          </svg>
          <svg viewBox="0 0 14 14" className="size-[14px]" fill="none" stroke="#fff" strokeWidth="2">
            <path d="M7 2L2 7l5 5M12.500 2l-5 5 5 5" />
          </svg>
        </div>
      </div>
      <div className="h-[83px] bg-white pt-px">
        <div className="flex h-6 items-center justify-between pr-1.5 pl-1.5">
          <button type="button" className="flex items-center gap-[5px] text-[14px] text-[#2d2d2d]">
            <svg viewBox="0 0 9 7" className="h-[7px] w-[9px]"><path d="M0 0h9L4.500 7z" fill="#5d7088" /></svg>
            Session list
          </button>
          <button type="button" aria-label="Session settings" className="flex items-center">
            <svg viewBox="0 0 12 12" className="size-3"><circle cx="6" cy="6" r="3.200" fill="none" stroke="#64758c" strokeWidth="2.200" /><path d="M6 0v12M0 6h12M2 2l8 8M10 2l-8 8" stroke="#64758c" strokeWidth="1.500" /><circle cx="6" cy="6" r="2" fill="#fff" /></svg>
            <svg viewBox="0 0 5 3" className="h-[3px] w-[5px]"><path d="M0 0h5L2.500 3z" fill="#64758c" /></svg>
          </button>
        </div>
        <div className="mt-4 flex items-center pl-[7px]">
          <svg viewBox="0 0 18 18" className="size-[18px]">
            <path d="M0.500 0.500h17v17H0.500z" fill="#fff" stroke="#8796a8" />
            <path d="M3 16q0-3 4-4v-2Q5 8 6 5q1-2 3-2t3 2q1 3-1 5v2q4 1 4 4z" fill="#8a99ab" />
          </svg>
          <span className="ml-1 w-[152px] text-[11px] whitespace-nowrap text-[#222]">DESKTOP-OE0QDVI (1 817 937</span>
          <svg viewBox="0 0 10 8" className="ml-[5px] h-2 w-2.5"><path d="M0 0h10L5 8z" fill="#4a4a4a" /></svg>
          <svg viewBox="0 0 13 13" className="ml-[9px] size-[13px]"><path d="M0 0l13 4-5 2 5 5-2 2-5-5-2 5z" fill="#4fa4f4" /></svg>
        </div>
      </div>
      <div className="h-[27px] bg-[#404040] pr-[9px] text-right leading-[22px]">
        <a href="#teamviewer" className="font-['Liberation_Sans',sans-serif] text-[12px] text-white underline">www.teamviewer.com</a>
      </div>
    </div>
  </aside>
);

const TASK = 'flex h-full items-center justify-center rounded-sm border border-[#5d7186] bg-[linear-gradient(135deg,#e0eaf5,#a9bfd9_60%,#bdd0e6)] shadow-[inset_0_0_0_1px_#dbe7f4]';

const RemoteTaskbar: React.FC = () => (
  <footer className="flex h-10 items-center border-t border-[#46586e] bg-[#a6bedb]">
    <button type="button" aria-label="Start" className="flex h-full w-[60px] items-center bg-[linear-gradient(90deg,#7289a4,#94abc6)] pl-[9px]">
      <Orb id="orb-remote" className="size-9" />
    </button>
    <button type="button" aria-label="Notepad" className={`w-[54px] ${TASK}`}>
      <svg viewBox="0 0 32 32" className="size-8">
        <path d="M12 2l16 1 2 24-6 4z" fill="#6b6250" />
        <path d="M26 4l2 22-5 4z" fill="#efefe8" />
        <path d="M12 2l15 1-4 27-22-6z" fill="#5fa9ba" />
        <path d="M12 2l15 1-2 12-19-1z" fill="#a9d6e0" />
        <path d="M12 2l15 1" stroke="#555" strokeWidth="2" strokeDasharray="1 1" />
      </svg>
    </button>
    <span className="h-full w-[5px] rounded-r-sm border-r-2 border-[#7f93aa]" />
    <button type="button" aria-label="Control Panel" className="flex h-full w-[64px] items-center justify-center">
      <svg viewBox="0 0 32 30" className="h-[30px] w-8">
        <path d="M0 1h32v22H0z" fill="#2b80c4" stroke="#1f68a8" />
        <circle cx="9" cy="9" r="5" fill="#f19a2c" />
        <path d="M9 9V3a6 6 0 1 0 5 8z" fill="#7fc4f2" />
        <path d="M17 6h10v3H17zM17 12h10v3H17z" fill="#9fd8f6" stroke="#e8f6ff" strokeWidth="0.700" />
        <path d="M5 18h3v2H5zM11 18h3v2h-3z" fill="#f6b23c" />
        <ellipse cx="16" cy="25" rx="6.500" ry="4.500" fill="#bfc3c8" />
      </svg>
    </button>
    <div className="flex h-full gap-[3px]">
      <button type="button" aria-label="Sticky Notes" className={`w-[59px] ${TASK}`}>
        <svg viewBox="0 0 32 26" className="h-[26px] w-8">
          <path d="M5 1l9 4-4 15-9-3z" fill="#8fce7c" />
          <path d="M10 3h12v19H8z" fill="#a8d4f2" />
          <path d="M13 8l14-5 4 16-14 5z" fill="#f7dc55" />
        </svg>
      </button>
      <button type="button" aria-label="Shutdown" className={`w-[59px] ${TASK}`}>
        <svg viewBox="0 0 32 32" className="size-8">
          <rect x="0.500" y="0.500" width="31" height="31" rx="4" fill="#f00" stroke="#200" />
          <circle cx="16" cy="16" r="10.500" fill="none" stroke="#fff" strokeWidth="3" />
          <path d="M16 9v14" stroke="#fff" strokeWidth="4" />
        </svg>
      </button>
      <button type="button" aria-label="StreamLine XR" className={`w-[59px] ${TASK}`}>
        <svg viewBox="0 0 32 32" className="size-8">
          <path d="M0.500 0.500h31v31h-31z" fill="#e2e2e2" stroke="#000" />
          <text x="15" y="11" fontSize="12" fill="#101070" className="font-['Liberation_Sans']">XR</text>
          <path d="M7.500 19.500h16v8h-16zM11 27.500v4M20 27.500v4M17.500 19v-4h5v4" fill="#fff" stroke="#000" strokeWidth="1.300" />
          <path d="M11 22l5 3" stroke="#c00" strokeWidth="2" />
        </svg>
      </button>
      <button type="button" aria-label="Explorer" className={`w-[54px] ${TASK}`}><FolderIcon className="size-8" /></button>
    </div>
    <span className="mr-[3px] h-full w-[5px] rounded-r-sm border-r-2 border-[#7f93aa]" />
    <button type="button" aria-label="Command Prompt" className={`w-[59px] ${TASK}`}>
      <svg viewBox="0 0 30 25" className="h-[25px] w-[30px]">
        <path d="M0 0h30v25H0z" fill="#000" stroke="#888" />
        <path d="M0 0h30v3H0z" fill="#c8c8c8" />
        <text x="3" y="12" fontSize="8" fill="#fff" className="font-['Liberation_Mono']">C:\_</text>
      </svg>
    </button>
    <div className="ml-auto flex h-full items-center bg-[linear-gradient(90deg,#a6bedb,#8499af_30px)] pl-9 text-white">
      <svg viewBox="0 0 8 5" className="mr-3 h-[5px] w-2"><path d="M0 5h8L4 0z" fill="#fff" /></svg>
      <svg viewBox="0 0 16 16" className="mr-2 size-4">
        <path d="M1 5h3l4-4v14l-4-4H1z" fill="#fff" stroke="#4b5b6d" strokeWidth="0.600" />
        <path d="M10 5q2 3 0 6M12 3q4 5 0 10" fill="none" stroke="#fff" strokeWidth="1.300" />
      </svg>
      <FlagIcon className="size-4" />
      <div className="mr-3 ml-[18px] text-center text-[11px] leading-[17px]">06:20<br />05/08/2023</div>
      <button type="button" aria-label="Show desktop" className="h-full w-[14px] border border-[#a9b9c9] bg-[linear-gradient(#73828f,#52616f_50%,#7d8d9d)]" />
    </div>
  </footer>
);

const RemoteWindow: React.FC = () => {
  const [tab, setTab] = useState('Real time data');

  return (
    <section className="mt-9 mr-[214px] mb-[52px] ml-[156px] flex flex-1 flex-col rounded-lg border border-[#cfdcf2] bg-[linear-gradient(115deg,#8ea3cb_0,#5f7ab4_60px,#2b4d96_260px,#1f448e_420px,#27509c_560px,#1f4590_680px,#4871b8_1150px,#4670b8_1300px,#a9bbe0_1460px,#5577b4_1600px,#24468c_1800px)] px-1.5 pb-1.5 shadow-[0_0_0_1px_#0a1a40,2px_4px_14px_4px_rgba(0,0,30,0.75)]">
      <header className="flex h-[34px] items-start justify-between">
        <div className="flex h-full items-center pl-[3px]">
          <RemoteIcon className="size-[18px]" />
          <h1 className="relative ml-[5px] text-[14px] text-black">
            <span className="absolute -inset-x-2 inset-y-0 rounded-full bg-white/45 blur-[5px]" />
            <span className="relative">192.168.0.150 - Remote Desktop Connection</span>
          </h1>
        </div>
        <div className="flex h-6 overflow-hidden rounded-b-[5px] border border-t-0 border-[#d5dff0] shadow-[0_0_0_1px_#33466e]">
          <button type="button" aria-label="Minimize" className="flex w-[35px] items-center justify-center border-r border-[#33466e] bg-[linear-gradient(#b3c1dc_50%,#7088b4_50%,#8ea5cf)]"><CaptionGlyph kind="min" className="h-[17px] w-5" /></button>
          <button type="button" aria-label="Maximize" className="flex w-[33px] items-center justify-center border-r border-[#33466e] bg-[linear-gradient(#b3c1dc_50%,#7088b4_50%,#8ea5cf)]"><CaptionGlyph kind="max" className="h-[17px] w-5" /></button>
          <button type="button" aria-label="Close" className="flex w-[58px] items-center justify-center bg-[linear-gradient(#dd9489_45%,#bb3a25_50%,#d0705c)]"><CaptionGlyph kind="close" className="h-4 w-[18px]" /></button>
        </div>
      </header>

      <div className="flex flex-1 flex-col border border-[#27364f]">
        <div className="flex h-[22px] items-center bg-[linear-gradient(#9ab2cd,#bbd2eb)] pl-0.5">
          <svg viewBox="0 0 16 16" className="size-4">
            <path d="M0.500 0.500h15v15H0.500z" fill="#e8e4e0" stroke="#000" />
            <path d="M3 7h10v6H3zM5 13v-3h6v3M9 7V4h3v3" fill="none" stroke="#000" />
            <path d="M6 9l4 2" stroke="#c00" strokeWidth="1.500" />
          </svg>
          <span className="ml-2 text-[11px]">StreamLine XR v14-6.vi</span>
          <div className="ml-auto flex gap-0.5 pr-0.5">
            {['min', 'restore', 'close'].map((kind) => (
              <button key={kind} type="button" aria-label={kind} className="flex h-[17px] w-[31px] items-center justify-center rounded-sm border border-[#5f7794] bg-[linear-gradient(#cfe0f2_45%,#9fb8d4_50%,#b9d0ea)]">
                <CaptionGlyph kind={kind} className="h-3 w-[15px]" />
              </button>
            ))}
          </div>
        </div>

        <div className="relative flex-1 border border-t-2 border-t-[#707070] border-r-white border-b-white border-l-[#707070] bg-[#d3d3d3]">
          <nav className="flex h-[26px] items-end pl-[3px] text-[12px] font-bold">
            {TABS.map(({ name, width }) => (
              <button
                key={name}
                type="button"
                onClick={() => setTab(name)}
                className={`${width} ${
                  name === tab
                    ? 'h-[26px] bg-white pr-1'
                    : 'h-[25px] border border-[#8a8a8a] bg-[linear-gradient(#f4f4f4,#cfcfcf)] pt-0.5 shadow-[inset_1px_1px_0_#fff]'
                }`}
              >
                {name}
              </button>
            ))}
          </nav>
          <div className="w-fit border-2 border-t border-t-[#8a8a8a] border-r-white border-b-white border-l-[#8a8a8a] bg-white pt-[14px] pr-[3px] pb-[3px] pl-1">
            <DataPanel />
          </div>
          <TeamViewer />
        </div>
        <RemoteTaskbar />
      </div>
    </section>
  );
};

/* ---------- desktop ---------- */

const SHORTCUTS = [
  { name: 'Recycle Bin', icon: <RecycleBin /> },
  { name: 'BL-View', icon: <BlView /> },
  {
    name: 'Google Chrome',
    icon: (
      <span className="relative block size-[60px]">
        <ChromeLogo className="size-[60px]" />
        <svg viewBox="0 0 60 60" className="absolute inset-0 size-[60px]"><ShortcutArrow /></svg>
      </span>
    ),
  },
  { name: 'MW41', icon: <Mw41 /> },
  { name: 'Wind Lidar Software', icon: <WindLidar /> },
  { name: 'AutoScreen...', icon: <ZipFolder /> },
  { name: 'Auto Screen Capture', icon: <AutoCapture /> },
];

const Taskbar: React.FC = () => (
  <footer className="relative flex h-12 items-center border-t border-[#7f97c9] bg-[linear-gradient(90deg,#1c3266_0,#1c3266_50px,#22418a_90px,#23438c_900px,#2b509c_1300px,#2e56a6_1560px,#2d55a4_1620px,#1b356e_1650px,#2b4d8c_1740px,#1c3568_1860px,#223f7c)] text-white shadow-[0_-1px_0_#071a4a]">
    <button type="button" aria-label="Start" className="ml-[11px]"><Orb id="orb-main" className="size-11" /></button>
    <button type="button" aria-label="Internet Explorer" className="ml-[30px]">
      <svg viewBox="0 0 38 38" className="size-[38px]">
        <path d="M20 4a16 16 0 1 0 15 22h-9q-2 4-7 4-6-1-7-7h24Q38 6 20 4zm-8 13q2-6 7-6t7 6z" fill="#5cc6f4" stroke="#2a90cf" strokeWidth="0.600" />
        <path d="M3 36Q-3 30 9 16T35 2q4 3 1 9 0-6-5-6-10 1-20 13T7 34q-2 3-4 2z" fill="#f6c829" />
      </svg>
    </button>
    <button type="button" aria-label="Explorer" className="ml-[31px]"><FolderIcon className="h-10 w-[42px]" /></button>
    <button type="button" aria-label="Media Player" className="ml-[29px] pt-1">
      <svg viewBox="0 0 34 34" className="size-[34px]">
        <path d="M20 1h12v30l-12 3z" fill="#5ba3cc" />
        <path d="M18 1h9v31l-9 1z" fill="#86c5e4" stroke="#4b93bd" strokeWidth="0.700" />
        <path d="M1 2l22-1v32L1 31z" fill="#a9d6ee" stroke="#4b93bd" strokeWidth="0.700" />
        <circle cx="13" cy="16" r="11" fill="#f0752a" />
        <path d="M9 9l12 7-12 7z" fill="#fff" />
      </svg>
    </button>
    <button type="button" aria-label="Google Chrome" className="ml-9"><ChromeLogo className="size-10" /></button>
    <button type="button" aria-label="Remote Desktop" className="ml-[17px] flex h-full w-[62px] items-center justify-center rounded-sm border border-[#e6ecf8] bg-[linear-gradient(120deg,#d4dbec,#8096c0_60%,#a0b1d4)]">
      <RemoteIcon className="h-10 w-[38px]" />
    </button>
    <span className="h-full w-[4px] border-r border-[#aebddd] bg-[#5f78ac]" />

    <div className="ml-auto flex h-full items-center">
      <svg viewBox="0 0 10 6" className="mr-[19px] h-1.5 w-2.5"><path d="M0 6h10L5 0z" fill="#fff" /></svg>
      <FlagIcon alert className="mr-[9px] size-5" />
      <svg viewBox="0 0 20 20" className="mr-2.5 size-5" fill="none" stroke="#fff" strokeWidth="1.800">
        <path d="M4 3h6v15H2V3h2V1h4v2" fill="#fff" fillOpacity="0.9" />
        <path d="M12 4h6v4q0 2-3 2t-3-2zM15 10v8M13.500 4V1M17 4V1" />
      </svg>
      <svg viewBox="0 0 20 20" className="mr-[9px] size-5" fill="none" stroke="#fff" strokeWidth="1.500">
        <path d="M8 4h11v10H5v-4M8 18h8M12 14v4M1 1h5v6H1zM3.500 7v11" />
      </svg>
      <svg viewBox="0 0 20 20" className="mr-6 size-5">
        <path d="M1 6h4l5-5v18l-5-5H1z" fill="#fff" />
        <circle cx="14" cy="14" r="4.500" fill="#fff" stroke="#d9261c" strokeWidth="2" />
        <path d="M11 11l6 6" stroke="#d9261c" strokeWidth="2" />
      </svg>
      <div className="mr-[14px] text-center text-[14px] leading-[22px]">06:20<br />05/08/2023</div>
      <button type="button" aria-label="Show desktop" className="h-full w-[14px] border border-[#6c85b5] bg-[linear-gradient(#7d92ba,#1f3870_45%,#2a4787)]" />
    </div>
  </footer>
);

const App: React.FC = () => (
  <div className="flex min-h-screen flex-col overflow-hidden bg-[radial-gradient(ellipse_800px_420px_at_84%_-4%,#3a86f4_0,rgba(30,100,230,0.7)_50%,transparent),radial-gradient(ellipse_1100px_700px_at_85%_85%,#0550d6_0,transparent),linear-gradient(35deg,transparent_46%,rgba(20,100,220,0.25)_52%,transparent_58%)] bg-[#0036b3] font-['Open_Sans','Noto_Sans',sans-serif] text-black">
    <main className="flex flex-1">
      <nav className="w-[94px] shrink-0 pt-[7px]">
        {SHORTCUTS.map(({ name, icon }) => (
          <button key={name} type="button" className="flex h-[129px] w-full flex-col items-center gap-1 text-[14px] leading-5 text-white [text-shadow:1px_1px_2px_#000,0_0_3px_#001]">
            {icon}
            {name}
          </button>
        ))}
      </nav>
      <RemoteWindow />
    </main>
    <Taskbar />
  </div>
);

export default App;
